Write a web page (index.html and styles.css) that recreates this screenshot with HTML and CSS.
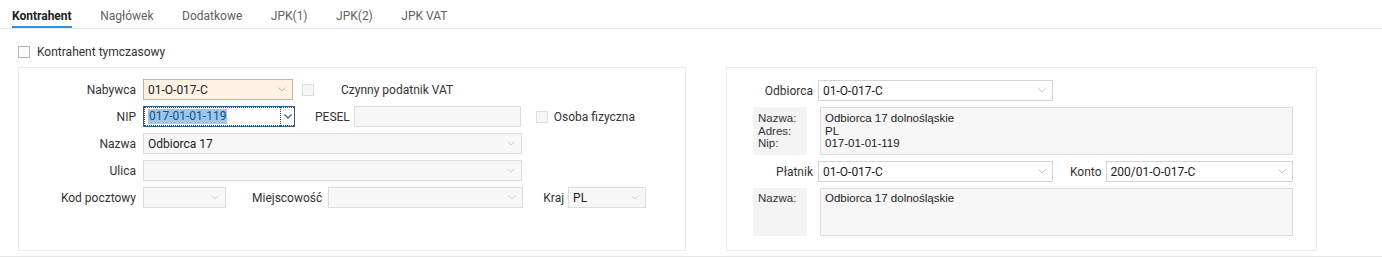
FILE: index.html
```html
<!DOCTYPE html>
<html lang="pl">
<head>
<meta charset="utf-8">
<title>Kontrahent</title>
<link rel="stylesheet" href="styles.css">
</head>
<body>
<nav class="tabs">
  <span class="tab active">Kontrahent</span>
  <span class="tab">Nagłówek</span>
  <span class="tab">Dodatkowe</span>
  <span class="tab">JPK(1)</span>
  <span class="tab">JPK(2)</span>
  <span class="tab">JPK VAT</span>
</nav>
<main class="content">
  <label class="temp"><span class="cb"></span><span>Kontrahent tymczasowy</span></label>
  <div class="panels">
    <section class="panel left">
      <div class="row">
        <span class="lbl">Nabywca</span>
        <div class="sel warn w150"><span class="val">01-O-017-C</span><svg class="chev" width="8" height="5" viewBox="0 0 8 5"><path d="M0.5 0.5L4 4L7.5 0.5"/></svg></div>
        <span class="cb dis cb-vat"></span>
        <span class="txt vat">Czynny podatnik VAT</span>
      </div>
      <div class="row">
        <span class="lbl">NIP</span>
        <div class="sel nip w152"><span class="edit"><span class="hl">017-01-01-119</span></span><span class="btn"><svg class="chev" width="8" height="5" viewBox="0 0 8 5"><path d="M0.5 0.5L4 4L7.5 0.5"/></svg></span></div>
        <span class="txt pesel">PESEL</span>
        <div class="sel dis w167"></div>
        <span class="cb dis cb-os"></span>
        <span class="txt">Osoba fizyczna</span>
      </div>
      <div class="row">
        <span class="lbl">Nazwa</span>
        <div class="sel dis w379"><span class="val">Odbiorca 17</span><svg class="chev" width="8" height="5" viewBox="0 0 8 5"><path d="M0.5 0.5L4 4L7.5 0.5"/></svg></div>
      </div>
      <div class="row">
        <span class="lbl">Ulica</span>
        <div class="sel dis w379"><span class="val"></span><svg class="chev" width="8" height="5" viewBox="0 0 8 5"><path d="M0.5 0.5L4 4L7.5 0.5"/></svg></div>
      </div>
      <div class="row">
        <span class="lbl">Kod pocztowy</span>
        <div class="sel dis w83"><span class="val"></span><svg class="chev" width="8" height="5" viewBox="0 0 8 5"><path d="M0.5 0.5L4 4L7.5 0.5"/></svg></div>
        <span class="txt miej">Miejscowość</span>
        <div class="sel dis w195"><span class="val"></span><svg class="chev" width="8" height="5" viewBox="0 0 8 5"><path d="M0.5 0.5L4 4L7.5 0.5"/></svg></div>
        <span class="txt kraj">Kraj</span>
        <div class="sel dis w77"><span class="val">PL</span><svg class="chev" width="8" height="5" viewBox="0 0 8 5"><path d="M0.5 0.5L4 4L7.5 0.5"/></svg></div>
      </div>
    </section>
    <section class="panel right">
      <div class="row">
        <span class="lbl r">Odbiorca</span>
        <div class="sel w235"><span class="val">01-O-017-C</span><svg class="chev" width="8" height="5" viewBox="0 0 8 5"><path d="M0.5 0.5L4 4L7.5 0.5"/></svg></div>
      </div>
      <div class="info">
        <div class="ilbl">Nazwa:<br>Adres:<br>Nip:</div>
        <div class="ibox">Odbiorca 17 dolnośląskie<br>PL<br>017-01-01-119</div>
      </div>
      <div class="row">
        <span class="lbl r">Płatnik</span>
        <div class="sel w235"><span class="val">01-O-017-C</span><svg class="chev" width="8" height="5" viewBox="0 0 8 5"><path d="M0.5 0.5L4 4L7.5 0.5"/></svg></div>
        <span class="txt konto">Konto</span>
        <div class="sel w187"><span class="val">200/01-O-017-C</span><svg class="chev" width="8" height="5" viewBox="0 0 8 5"><path d="M0.5 0.5L4 4L7.5 0.5"/></svg></div>
      </div>
      <div class="info tall">
        <div class="ilbl">Nazwa:</div>
        <div class="ibox">Odbiorca 17 dolnośląskie</div>
      </div>
    </section>
  </div>
  <div class="footer-line"></div>
</main>
</body>
</html>
```
FILE: styles.css
```css
* { box-sizing: border-box; }
html, body { margin: 0; padding: 0; background: #fff; }
body {
  font-family: Roboto, "Liberation Sans", sans-serif;
  font-size: 12px;
  color: #333;
  width: 1382px;
  height: 257px;
  overflow: hidden;
}

.tabs {
  display: flex;
  gap: 28.5px;
  height: 29px;
  padding-left: 12px;
  border-bottom: 1px solid #e6e6e6;
}
.tab {
  display: flex;
  align-items: center;
  height: 28px;
  padding-top: 5px;
  color: #616161;
  border-bottom: 2px solid transparent;
}
.tab.active {
  color: #222;
  font-weight: 700;
  border-bottom-color: #3a8fd8;
}

.content { padding: 0; }

.temp {
  display: flex;
  align-items: center;
  gap: 7px;
  height: 12px;
  margin: 17px 0 0 18px;
  color: #333;
}

.cb {
  display: inline-block;
  width: 12px;
  height: 12px;
  border: 1px solid #b9b9b9;
  background: #fbfbfb;
  flex: none;
}
.cb.dis { border-color: #dedede; background: #f6f6f6; }

.panels {
  display: flex;
  gap: 40px;
  margin: 9px 0 0 18px;
}
.panel {
  height: 184px;
  border: 1px solid #ececec;
  display: flex;
  flex-direction: column;
}
.panel.left { width: 668px; padding-top: 11px; gap: 6px; }
.panel.right { width: 591px; padding-top: 12px; gap: 6px; }

.row {
  display: flex;
  align-items: center;
  height: 21px;
}
.lbl {
  width: 117px;
  text-align: right;
  margin-right: 7px;
  color: #333;
  flex: none;
}
.lbl.r { width: 86px; margin-right: 5px; }

.txt { color: #333; white-space: nowrap; }

.sel {
  display: flex;
  align-items: center;
  justify-content: space-between;
  height: 21px;
  padding: 0 6px 0 4px;
  border: 1px solid #d4d4d4;
  background: #fff;
  color: #222;
  flex: none;
}
.sel .chev { fill: none; stroke: #c6c6c6; stroke-width: 1; }
.sel.dis { background: #f7f7f7; border-color: #dddddd; }
.sel.dis .chev { stroke: #d6d6d6; }
.sel.warn { background: #fdf2e3; border-color: #e3a795; }
.sel.warn .chev { stroke: #e3a795; }

.sel.nip {
  padding: 0;
  border: 1px solid #2d5f8f;
  align-items: stretch;
}
.nip .edit {
  flex: 1;
  display: flex;
  align-items: center;
  padding-left: 3px;
  border: 1px dotted #444;
  border-right: none;
}
.nip .hl {
  background: #99c8ef;
  color: #1e4e7a;
  line-height: 15px;
  padding: 0 1px;
}
.nip .btn {
  width: 14px;
  display: flex;
  align-items: center;
  justify-content: center;
  border-left: 1px dotted #444;
  border-top: 1px dotted #444;
  border-bottom: 1px dotted #444;
}
.nip .chev { stroke: #2d6aa5; stroke-width: 1.3; }

.w150 { width: 150px; }
.w152 { width: 152px; }
.w167 { width: 167px; }
.w379 { width: 379px; }
.w83 { width: 83px; }
.w195 { width: 195px; }
.w77 { width: 78px; }
.w235 { width: 235px; }
.w187 { width: 187px; }

.cb-vat { margin-left: 9px; }
.vat { margin-left: 27px; }
.pesel { margin-left: 20px; margin-right: 4px; }
.cb-os { margin-left: 15px; margin-right: 6px; }
.miej { margin-left: 26px; margin-right: 6px; }
.kraj { margin-left: 20px; margin-right: 4px; }
.konto { margin-left: 17px; margin-right: 4px; }

.info {
  display: flex;
  gap: 13px;
  height: 48px;
  margin-left: 26px;
  font-family: "Liberation Sans", Arial, sans-serif;
  font-size: 11.5px;
  line-height: 12.5px;
  color: #333;
}
.ilbl {
  width: 54px;
  background: #f4f4f4;
  padding: 5px 0 0 5px;
}
.ibox {
  width: 473px;
  background: #f7f7f7;
  border: 1px solid #dcdcdc;
  padding: 4px 0 0 4px;
  color: #222;
}
.info.tall .ilbl { padding-top: 4px; }
.info.tall .ibox { padding-top: 3px; }

.footer-line {
  margin-top: 5px;
  height: 1px;
  background: #e6e6e6;
}
```
